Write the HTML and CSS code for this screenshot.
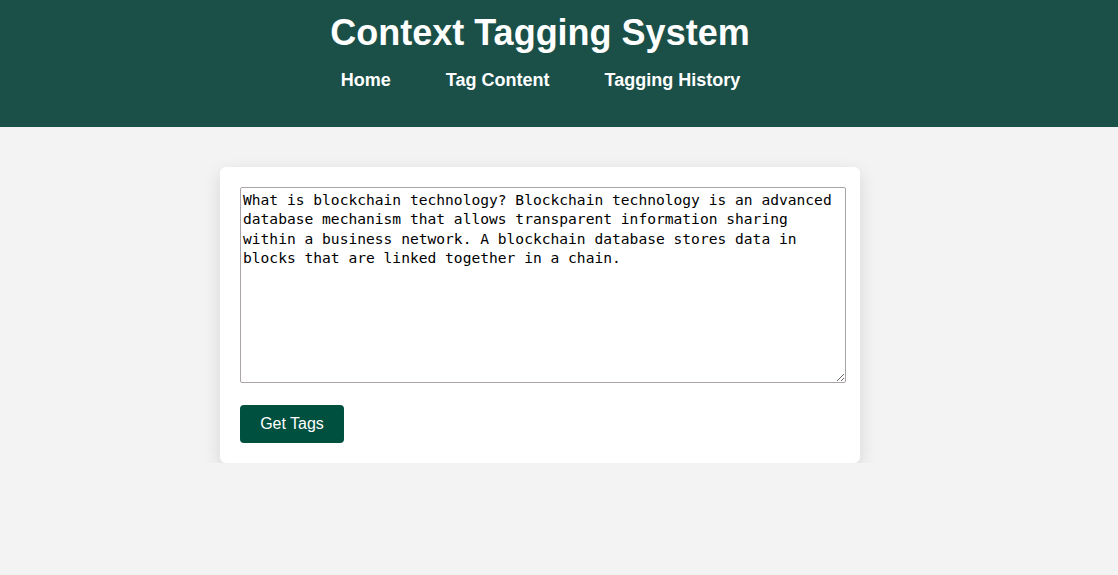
FILE: index.html
```html
<!DOCTYPE html>
<html>
<head>
<meta charset="utf-8">
<title>Context Tagging System</title>
<link rel="stylesheet" href="styles.css">
</head>
<body>
<header class="site-header">
  <div class="header-inner">
    <h1 class="title">Context Tagging System</h1>
    <nav class="nav">
      <a href="#" class="nav-link">Home</a>
      <a href="#" class="nav-link">Tag Content</a>
      <a href="#" class="nav-link">Tagging History</a>
    </nav>
  </div>
</header>
<main class="main">
  <div class="card">
    <textarea class="content-input">What is blockchain technology? Blockchain technology is an advanced database mechanism that allows transparent information sharing within a business network. A blockchain database stores data in blocks that are linked together in a chain.</textarea>
    <button class="btn">Get Tags</button>
  </div>
</main>
</body>
</html>
```
FILE: styles.css
```css
html, body {
  margin: 0;
  padding: 0;
  background: #f3f3f3;
  font-family: "Liberation Sans", Arial, sans-serif;
}
.site-header {
  background: #1b5048;
  height: 127px;
  box-sizing: border-box;
}
.header-inner {
  width: 1080px;
  display: flex;
  flex-direction: column;
  align-items: center;
  padding-top: 12px;
}
.title {
  margin: 0;
  color: #fff;
  font-size: 36px;
  font-weight: bold;
  line-height: 42px;
}
.nav {
  display: flex;
  gap: 55px;
  margin-top: 15px;
  padding-left: 1px;
}
.nav-link {
  color: #fff;
  font-size: 18px;
  font-weight: bold;
  text-decoration: none;
  line-height: 22px;
}
.main {
  width: 1080px;
  padding-top: 40px;
}
.card {
  width: 600px;
  margin: 0 auto;
  background: #fff;
  padding: 20px;
  border-radius: 6px;
  box-shadow: 0 6px 18px rgba(0,0,0,0.12);
}
.content-input {
  display: block;
  width: 100%;
  height: 190px;
  box-sizing: content-box;
  padding: 2px;
  margin: 0 0 22px 0;
  border: 1px solid #aaa3aa;
  border-radius: 2px;
  font-family: "DejaVu Sans Mono", monospace;
  font-size: 14.6px;
  line-height: 19.3px;
  color: #000;
  resize: vertical;
}
.btn {
  display: block;
  background: #00503f;
  color: #fff;
  border: none;
  border-radius: 4px;
  font-family: "Liberation Sans", Arial, sans-serif;
  font-size: 16px;
  width: 104px;
  height: 38px;
  cursor: pointer;
}
```
